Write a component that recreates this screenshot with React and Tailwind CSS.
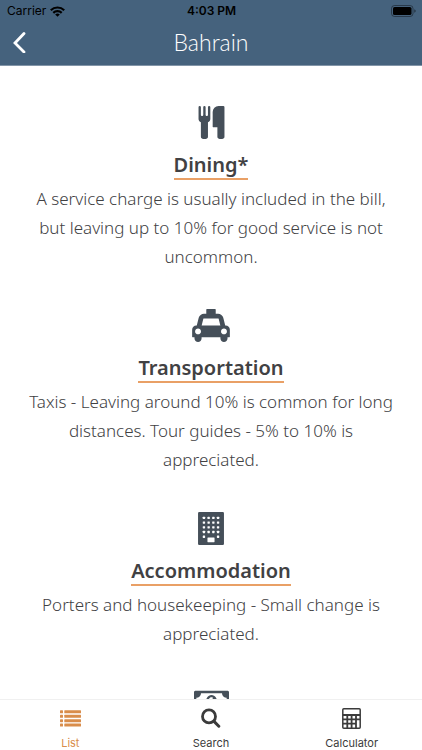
import React from 'react';

function CutleryIcon() {
  return (
    <svg viewBox="0 0 1792 1792" className="h-[33px] w-[33px]" fill="currentColor" aria-hidden="true">
      <path d="M832 64v640q0 61-35.5 111t-92.5 70v779q0 52-38 90t-90 38H448q-52 0-90-38t-38-90V885q-57-20-92.5-70T192 704V64q0-26 19-45t45-19 45 19 19 45v416q0 26 19 45t45 19 45-19 19-45V64q0-26 19-45t45-19 45 19 19 45v416q0 26 19 45t45 19 45-19 19-45V64q0-26 19-45t45-19 45 19 19 45zm768 0v1600q0 52-38 90t-90 38h-128q-52 0-90-38t-38-90v-512H992q-13 0-22.5-9.5T960 1120V320q0-132 94-226t226-94h256q26 0 45 19t19 45z" />
    </svg>
  );
}

function TaxiIcon() {
  return (
    <svg viewBox="0 0 2048 1792" className="h-[33px] w-[38px]" fill="currentColor" fillRule="evenodd" aria-hidden="true">
      <path d="M1824 896q93 0 158.5 65.5t65.5 158.5v384q0 14-9 23t-23 9h-96v64q0 80-56 136t-136 56-136-56-56-136v-64h-1024v64q0 80-56 136t-136 56-136-56-56-136v-64h-96q-14 0-23-9t-9-23v-384q0-93 65.5-158.5t158.5-65.5h28l105-419q23-94 104-157.5t179-63.5h128v-224q0-14 9-23t23-9h448q14 0 23 9t9 23v224h128q98 0 179 63.5t104 157.5l105 419h28zm-1504 480q66 0 113-47t47-113-47-113-113-47-113 47-47 113 47 113 113 47zm196-480h1016l-89-357q-2-8-14-17.5t-21-9.5h-768q-9 0-21 9.5t-14 17.5zm1212 480q66 0 113-47t47-113-47-113-113-47-113 47-47 113 47 113 113 47z" />
    </svg>
  );
}

function BuildingIcon() {
  const rows = [256, 512, 768, 1024, 1280];
  const cols = [256, 512, 768, 1024];
  return (
    <svg viewBox="0 0 1408 1792" className="h-[33px] w-[26px]" aria-hidden="true">
      <rect width="1408" height="1792" rx="64" fill="currentColor" />
      {rows.map((y) =>
        cols
          .filter((x) => y < 1280 || x === 256 || x === 1024)
          .map((x) => <rect key={`${x}-${y}`} x={x} y={y} width="128" height="128" rx="24" fill="#fff" />)
      )}
      <rect x="512" y="1390" width="384" height="256" rx="24" fill="#fff" />
    </svg>
  );
}

function MoneyIcon() {
  return (
    <svg viewBox="0 0 1920 1792" className="h-[33px] w-[35px]" fill="currentColor" fillRule="evenodd" aria-hidden="true">
      <path d="M768 1152h384v-96h-128v-448h-114l-148 137 77 80q42-37 55-57h2v288h-128v96zm512-256q0 70-21 142t-59.5 134-101.5 101-138 39-138-39-101.5-101-59.5-134-21-142 21-142 59.5-134 101.5-101 138-39 138 39 101.5 101 59.5 134 21 142zm512 256v-512q-106 0-181-75t-75-181h-1152q0 106-75 181t-181 75v512q106 0 181 75t75 181h1152q0-106 75-181t181-75zm128-832v1152q0 26-19 45t-45 19h-1792q-26 0-45-19t-19-45v-1152q0-26 19-45t45-19h1792q26 0 45 19t19 45z" />
    </svg>
  );
}

function ListIcon() {
  return (
    <svg viewBox="0 0 21 17" className="h-[17px] w-[21px]" fill="currentColor" aria-hidden="true">
      {[0.3, 4.8, 9.2, 13.6].map((y) => (
        <g key={y}>
          <rect x="0" y={y} width="3" height="3" rx="0.6" />
          <rect x="4.3" y={y} width="16.7" height="3" rx="0.5" />
        </g>
      ))}
    </svg>
  );
}

function SearchIcon() {
  return (
    <svg viewBox="0 0 20 20" className="h-5 w-5" fill="none" stroke="currentColor" aria-hidden="true">
      <circle cx="8" cy="8.4" r="6.5" strokeWidth="2.8" />
      <path d="M13 13.4l4.8 4.8" strokeWidth="3" strokeLinecap="round" />
    </svg>
  );
}

function CalculatorIcon() {
  return (
    <svg viewBox="0 0 19 21" className="h-[21px] w-[19px]" fill="none" stroke="currentColor" strokeWidth="1.5" aria-hidden="true">
      <rect x="0.8" y="0.8" width="17.4" height="19.4" rx="1" />
      <path d="M1 7h17M1 11.3h17M1 15.7h13M5.3 7v13M9.6 7v13M14 7v13" strokeWidth="1.8" />
    </svg>
  );
}

function WifiIcon() {
  return (
    <svg viewBox="0 0 15 11" className="h-[11px] w-[15px]" fill="none" stroke="currentColor" strokeWidth="2.2" aria-hidden="true">
      <path d="M0.8 4.2a9.6 9.6 0 0 1 13.4 0" />
      <path d="M3.3 6.9a6 6 0 0 1 8.4 0" />
      <path d="M7.5 10.8L5.2 8.5a3.3 3.3 0 0 1 4.6 0z" fill="currentColor" stroke="none" />
    </svg>
  );
}

function BatteryIcon() {
  return (
    <svg viewBox="0 0 25 12" className="h-3 w-[25px]" aria-hidden="true">
      <rect x="0.5" y="0.5" width="21.5" height="11" rx="3" fill="none" stroke="#000" strokeOpacity="0.4" />
      <rect x="2" y="2" width="18.5" height="8" rx="1.6" fill="#000" />
      <path d="M23.3 4.2q1.4 0.5 1.4 1.8t-1.4 1.8z" fill="#000" fillOpacity="0.5" />
    </svg>
  );
}

const sections = [
  {
    title: 'Dining*',
    text: 'A service charge is usually included in the bill, but leaving up to 10% for good service is not uncommon.',
    Icon: CutleryIcon,
  },
  {
    title: 'Transportation',
    text: 'Taxis - Leaving around 10% is common for long distances. Tour guides - 5% to 10% is appreciated.',
    Icon: TaxiIcon,
  },
  {
    title: 'Accommodation',
    text: 'Porters and housekeeping - Small change is appreciated.',
    Icon: BuildingIcon,
  },
  { Icon: MoneyIcon },
];

const tabs = [
  { label: 'List', Icon: ListIcon, active: true },
  { label: 'Search', Icon: SearchIcon },
  { label: 'Calculator', Icon: CalculatorIcon },
];

function TipSection({ title, text, Icon }) {
  return (
    <section className="flex flex-col items-center pb-[38px] text-center">
      <span className="text-[#454f59]">
        <Icon />
      </span>
      {title && (
        <h2 className="mt-3 border-b-2 border-[#e9a066] font-['Noto_Sans',sans-serif] text-[20px] leading-[27px] font-semibold text-[#414143]">
          {title}
        </h2>
      )}
      {text && (
        <p className="mt-1 font-['Noto_Sans',sans-serif] text-[17px] leading-[29px] font-light text-[#414143]">{text}</p>
      )}
    </section>
  );
}

export default function App() {
  return (
    <div className="flex h-screen flex-col bg-white font-['Inter',sans-serif]">
      <header className="shrink-0 border-b border-[#8295a8] bg-[#45627d]">
        <div className="grid h-[22px] grid-cols-3 items-center pr-1.5 pl-[7px] text-xs text-black">
          <div className="flex items-center gap-1">
            <span>Carrier</span>
            <WifiIcon />
          </div>
          <span className="text-center font-semibold">4:03 PM</span>
          <div className="flex justify-end">
            <BatteryIcon />
          </div>
        </div>
        <div className="grid h-[43px] grid-cols-[44px_1fr_44px] items-center pb-1">
          <button type="button" aria-label="Back" className="flex h-10 items-center pl-3 text-white">
            <svg viewBox="0 0 14 22" className="h-[22px] w-[14px]" fill="none" stroke="currentColor" strokeWidth="2.8" aria-hidden="true">
              <path d="M12 2.5L3 12l9 9" strokeLinecap="round" />
            </svg>
          </button>
          <h1 className="text-center font-['Lato',sans-serif] text-[23px] leading-7 font-light text-white">Bahrain</h1>
        </div>
      </header>

      <main className="min-h-0 flex-1 overflow-hidden px-6 pt-10">
        {sections.map((section, index) => (
          <TipSection key={index} {...section} />
        ))}
      </main>

      <nav className="grid h-[51px] shrink-0 grid-cols-3 border-t border-[#f0f0f0] bg-white">
        {tabs.map(({ label, Icon, active }) => (
          <a
            key={label}
            href={`#${label.toLowerCase()}`}
            className={`flex flex-col items-center pt-1.5 text-[11px] leading-4 ${active ? 'text-[#d98d4b]' : 'text-[#3b3b3b]'}`}
          >
            <span className="flex h-6 items-center">
              <Icon />
            </span>
            <span className="mt-[5px]">{label}</span>
          </a>
        ))}
      </nav>
    </div>
  );
}
